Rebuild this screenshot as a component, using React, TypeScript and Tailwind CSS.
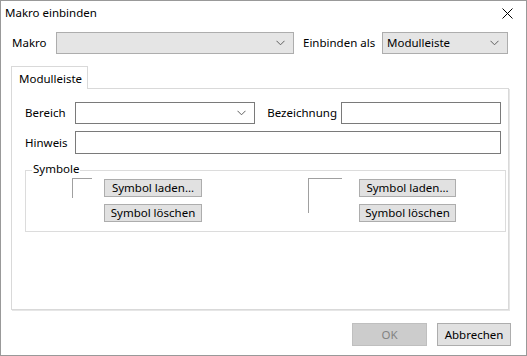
import React from 'react';

const font = { fontFamily: '"Noto Sans", "Open Sans", sans-serif' };

const Chevron = () => (
    <svg width="9" height="6" viewBox="0 0 9 6" className="shrink-0">
        <path d="M0.5 0.8 L4.5 4.8 L8.5 0.8" fill="none" stroke="#606060" strokeWidth="1" />
    </svg>
);

const Combo = ({ value, width, gray }: { value?: string; width: string; gray?: boolean }) => (
    <div
        className={`${width} h-[22px] flex items-center justify-between pl-[4px] pr-[8px] border ${
            gray ? 'bg-[#e5e5e5] border-[#adadad]' : 'bg-white border-[#7a7a7a]'
        }`}
    >
        <span>{value}</span>
        <Chevron />
    </div>
);

const WinButton = ({ label, width, height, disabled }: { label: string; width: string; height: string; disabled?: boolean }) => (
    <div
        className={`${width} ${height} flex items-center justify-center border ${
            disabled ? 'bg-[#cccccc] border-[#bfbfbf] text-[#838383]' : 'bg-[#e1e1e1] border-[#adadad] text-black'
        }`}
    >
        {label}
    </div>
);

const SymbolSlot = ({ box, gap, btnWidth }: { box: string; gap: string; btnWidth: string }) => (
    <div className="flex">
        <div className={`${box} border-t border-l border-[#a0a0a0]`} />
        <div className={`${gap} flex flex-col gap-[7px] pt-[1px]`}>
            <WinButton label="Symbol laden..." width={btnWidth} height="h-[18px]" />
            <WinButton label="Symbol löschen" width={btnWidth} height="h-[18px]" />
        </div>
    </div>
);

const App = () => {
    return (
        <div style={font} className="w-[527px] h-[356px] border border-[#999999] bg-white text-[11.5px] text-black flex flex-col">
            {/* title bar */}
            <div className="h-[24px] flex items-center justify-between pl-[4px] pr-[13px]">
                <span>Makro einbinden</span>
                <svg width="11" height="11" viewBox="0 0 11 11">
                    <path d="M0.5 0.5 L10.5 10.5 M10.5 0.5 L0.5 10.5" stroke="#000" strokeWidth="1" />
                </svg>
            </div>

            {/* top row */}
            <div className="mt-[7px] flex items-center pl-[11px]">
                <span className="w-[44px]">Makro</span>
                <Combo width="w-[238px]" gray />
                <span className="ml-[9px] w-[79px]">Einbinden als</span>
                <Combo value="Modulleiste" width="w-[126px]" gray />
            </div>

            {/* tab control */}
            <div className="mt-[12px] ml-[10px] w-[498px] flex flex-col">
                <div className="w-[77px] h-[23px] border border-b-0 border-[#d9d9d9] bg-white pl-[7px] pt-[3px] -mb-px relative z-10">
                    Modulleiste
                </div>
                <div className="h-[222px] border border-[#d9d9d9] shadow-[1px_1px_0_#e6e6e6] pt-[13px] pl-[13px]">
                    <div className="flex items-center">
                        <span className="w-[50px]">Bereich</span>
                        <Combo width="w-[180px]" />
                        <span className="w-[86px] text-right pr-[4px]">Bezeichnung</span>
                        <div className="w-[160px] h-[22px] border border-[#7a7a7a]" />
                    </div>
                    <div className="mt-[7px] flex items-center">
                        <span className="w-[50px]">Hinweis</span>
                        <div className="w-[426px] h-[23px] border border-[#7a7a7a]" />
                    </div>

                    {/* group box */}
                    <div className="relative mt-[16px] w-[481px] h-[62px] border border-[#dcdcdc] pt-[7px] pl-[46px]">
                        <span className="absolute left-[6px] top-[-10px] bg-white px-[1px] leading-[16px]">Symbole</span>
                        <div className="flex">
                            <SymbolSlot box="w-[20px] h-[20px]" gap="ml-[12px]" btnWidth="w-[98px]" />
                            <div className="ml-[106px]">
                                <SymbolSlot box="w-[34px] h-[35px]" gap="ml-[17px]" btnWidth="w-[97px]" />
                            </div>
                        </div>
                    </div>
                </div>
            </div>

            {/* footer buttons */}
            <div className="mt-[13px] flex justify-end gap-[10px] pr-[15px]">
                <WinButton label="OK" width="w-[75px]" height="h-[23px]" disabled />
                <WinButton label="Abbrechen" width="w-[74px]" height="h-[23px]" />
            </div>
        </div>
    );
};

export default App;
